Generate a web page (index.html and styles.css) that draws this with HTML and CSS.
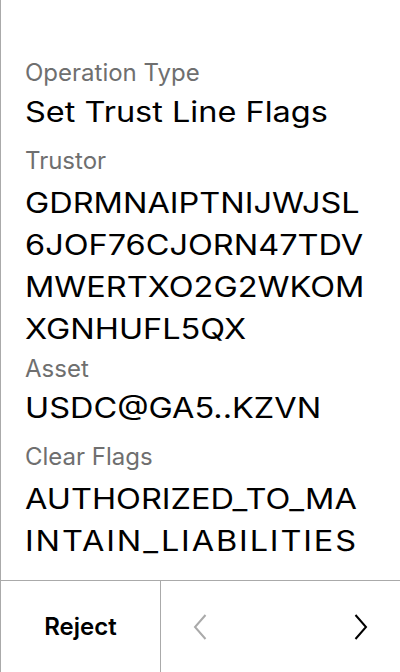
FILE: index.html
```html
<!DOCTYPE html>
<html>
<head>
<meta charset="utf-8">
<link rel="stylesheet" href="styles.css">
</head>
<body>
<div class="screen">
  <main class="content">
    <div class="field">
      <div class="label">Operation Type</div>
      <div class="value"><span class="line">Set Trust Line Flags</span></div>
    </div>
    <div class="field">
      <div class="label">Trustor</div>
      <div class="value multi">
        <span class="line">GDRMNAIPTNIJWJSL</span>
        <span class="line">6JOF76CJORN47TDV</span>
        <span class="line">MWERTXO2G2WKOM</span>
        <span class="line">XGNHUFL5QX</span>
      </div>
    </div>
    <div class="field">
      <div class="label">Asset</div>
      <div class="value"><span class="line">USDC@GA5..KZVN</span></div>
    </div>
    <div class="field">
      <div class="label">Clear Flags</div>
      <div class="value multi">
        <span class="line">AUTHORIZED_TO_MA</span>
        <span class="line wide">INTAIN_LIABILITIES</span>
      </div>
    </div>
  </main>
  <footer class="footer">
    <div class="reject">Reject</div>
    <div class="nav">
      <svg class="chev chev-disabled" width="14" height="26" viewBox="0 0 14 26"><path d="M12.5 1 L2 13 L12.5 25" fill="none" stroke="currentColor" stroke-width="2"/></svg>
      <svg class="chev" width="14" height="26" viewBox="0 0 14 26"><path d="M1.5 1 L12 13 L1.5 25" fill="none" stroke="currentColor" stroke-width="2"/></svg>
    </div>
  </footer>
</div>
</body>
</html>
```
FILE: styles.css
```css
html, body {
  margin: 0;
  padding: 0;
  background: #fff;
}
body {
  font-family: Inter, "Noto Sans", sans-serif;
  color: #000;
}
.screen {
  width: 400px;
  height: 672px;
  box-sizing: border-box;
  border-left: 1px solid #aaaaaa;
  display: flex;
  flex-direction: column;
}
.content {
  flex: 1;
  padding: 57px 24px 0 24px;
  display: flex;
  flex-direction: column;
  gap: 12px;
}
.field {
  display: flex;
  flex-direction: column;
}
.label {
  font-size: 24px;
  line-height: 32px;
  color: #6f6f6f;
}
.value {
  margin-top: 2px;
  font-size: 28px;
  line-height: 42px;
  display: flex;
  flex-direction: column;
  align-items: flex-start;
}
.value.multi {
  margin-top: 5px;
  margin-bottom: -9px;
}
.line {
  display: block;
  white-space: nowrap;
  transform: scaleX(1.16);
  transform-origin: left center;
}
.line.wide {
  letter-spacing: 1.6px;
}
.footer {
  height: 91px;
  border-top: 1px solid #aaaaaa;
  display: flex;
}
.reject {
  width: 159px;
  border-right: 1px solid #aaaaaa;
  display: flex;
  align-items: center;
  justify-content: center;
  font-size: 24px;
  font-weight: 600;
}
.nav {
  flex: 1;
  display: flex;
  align-items: center;
  justify-content: space-between;
  padding: 0 32px 0 32px;
}
.chev {
  color: #000;
}
.chev-disabled {
  color: #aaaaaa;
}
```
